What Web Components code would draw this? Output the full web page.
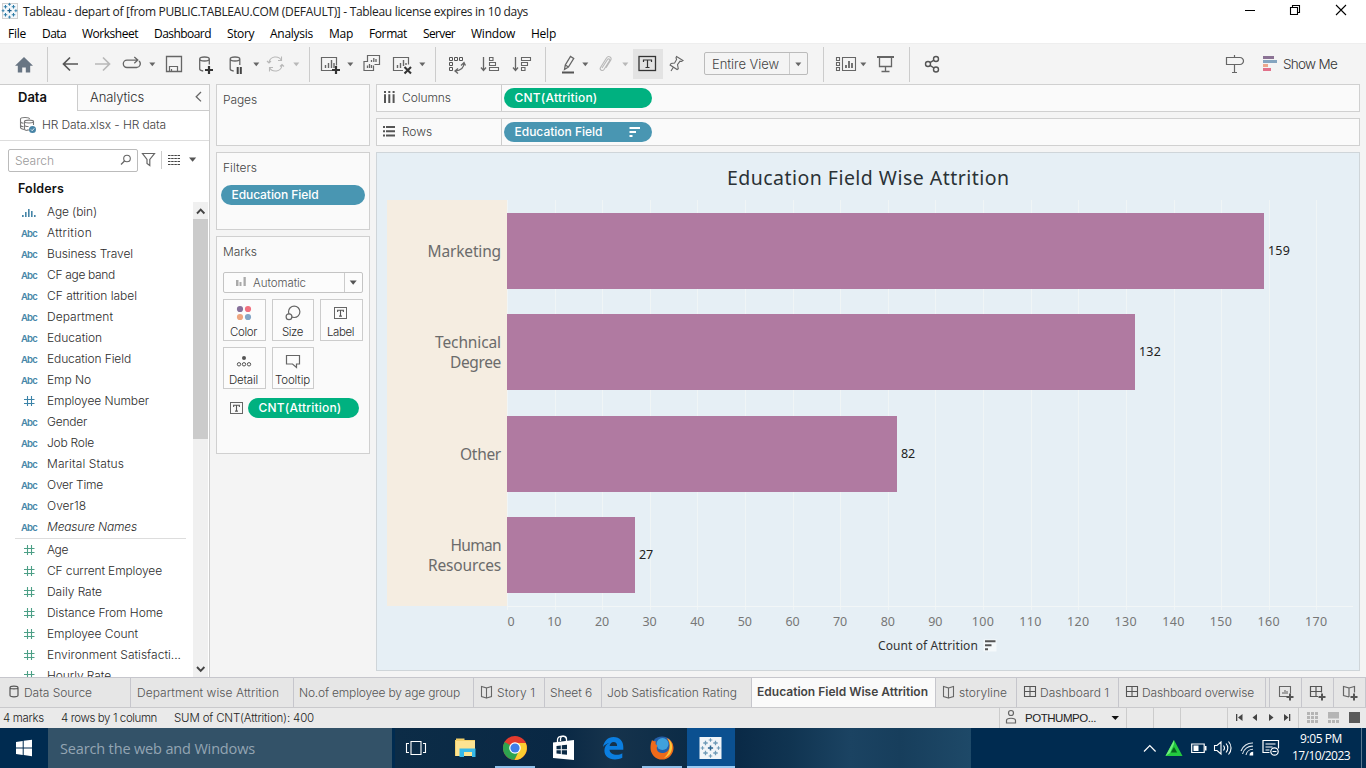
<!DOCTYPE html>
<html lang="en">
<head>
<meta charset="utf-8">
<title>Tableau</title>
<style>
html,body{margin:0;padding:0;width:1366px;height:768px;overflow:hidden;background:#f4f4f4}
</style>
</head>
<body>
<tableau-app></tableau-app>
<script>
const UI='Inter,"Liberation Sans",sans-serif', SEG='"Open Sans","Noto Sans",sans-serif', BOOK='"Noto Sans","Open Sans",sans-serif', ARIAL='"Liberation Sans",sans-serif';

/* Icons: [x, y, width, height, markup]; shapes use window coordinates through the viewBox. */
const G='#666', L='#b8b8b8';
const st=(d,c=G,w=1.3,x='')=>`<path d="${d}" fill="none" stroke="${c}" stroke-width="${w}" ${x}/>`;
const fl=(d,c=G)=>`<path d="${d}" fill="${c}"/>`;
const caret=(x,c=G,y=62.5)=>[x-3,y-.5,7,5,fl(`M${x-2.7} ${y}h6l-3 3.8z`,c)];
const plus=(x,y,c='#333',w=2.2,r=4)=>st(`M${x-r} ${y}h${2*r}M${x} ${y-r}v${2*r}`,c,w);
const spark=(cx,cy,k,c1,c2)=>{const p=(x,y,r,c,w)=>st(`M${cx+(x-r)*k} ${cy+y*k}h${2*r*k}M${cx+x*k} ${cy+(y-r)*k}v${2*r*k}`,c,w);
 return p(0,0,2.6,c1,1.5*k)+[[-5,-5],[5,-5],[-5,5],[5,5]].map(a=>p(a[0],a[1],2.2,c2,1.3*k)).join('')+[[0,-8],[0,8],[-8,0],[8,0]].map(a=>p(a[0],a[1],1.8,c2,1.1*k)).join('')};
const T=(x,y,w,h)=>`<rect x="${x+.5}" y="${y+.5}" width="${w-1}" height="${h-1}" fill="none" stroke="#666" stroke-width="1"/>`+st(`M${x+w*.28} ${y+h*.42}V${y+h*.27}H${x+w*.72}V${y+h*.42}M${x+w*.5} ${y+h*.27}V${y+h*.76}M${x+w*.39} ${y+h*.76}H${x+w*.61}`,'#555',1.1);
const book=(x,y)=>st(`M${x+6} ${y+2}v10l-5-1.5v-10zM${x+6} ${y+2}l5-1.5v10l-5 1.5`,'#666',1.1);
const dash=(x,y)=>st(`M${x+.5} ${y+.5}h11v10h-11zM${x+6} ${y+.5}v10M${x+.5} ${y+5.5}h11`,'#555',1.1);
const hash=c=>[24,0,11,12,st('M27.5 1v10M31.500 1v10M24 4.500h10.500M24 8.500h10.500',c,1.1)];
const sortI=(x,y,c)=>fl(`M${x} ${y}h10.500v2h-10.500zM${x} ${y+4}h6.500v2h-6.500zM${x} ${y+8}h3v2h-3z`,c);
const ICON={
 logo:[2,3,16,16,`<rect x="2.500" y="3.500" width="15" height="15" fill="#f4f8fb" stroke="#d0d0d0"/>`+spark(9.500,10.700,.8,'#1c5f8c','#2f7da8')],
 min:[1245,4,12,12,st('M1245 10.500h10','#000',1)],
 max:[1289,4,12,12,st('M1290.500 7.500h7v7h-7zM1292.500 7.500v-2h7v7h-2','#000',1.1)],
 close:[1335,4,12,12,st('M1336 5l10 10M1346 5l-10 10','#000',1.1)],
 home:[15,56,18,17,fl('M24 57l9 8.700h-2.800v6.800h-4.400v-5h-3.600v5h-4.400v-6.800H15z','#687583')],
 back:[62,56,17,16,st('M78 64H63.500M70 57.500L63.500 64l6.500 6.500','#555',1.7)],
 fwd:[94,56,17,16,st('M95 64h14.500M103 57.500l6.500 6.500-6.500 6.500',L,1.7)],
 loop:[122,56,20,15,st('M133 67.500H127a3.700 3.700 0 0 1 0-7.400h10.500M134.300 57l3.500 3.100-3.500 3.100M139 61a3.700 3.700 0 0 1-2.500 6.500h-3.500')],
 save:[165,55,18,18,st('M166.500 56.500h15v15h-15z')+st('M169.500 71.500v-5h8v5M171.500 71.500v-2.500','#666',1.2)],
 dbadd:[199,56,15,18,st('M199.700 59c0-1.200 2-2 4.800-2s4.800.8 4.800 2-2 2-4.800 2-4.800-.8-4.800-2zV69c0 1 1.500 1.800 3.500 2M209.300 59v5.500')+plus(209,70)],
 dbpause:[229,56,15,18,st('M230.200 59c0-1.200 2-2 4.800-2s4.800.8 4.800 2-2 2-4.800 2-4.800-.8-4.800-2zV69c0 1 1.500 1.800 3.500 2M239.800 59v6')+st('M237.700 67v7M240.800 67v7','#444',2)],
 refresh:[266,55,19,18,st('M269 62.500a6.700 6.700 0 0 1 12.500-2M281.500 56.500v4h-3.500M282 65.500a6.700 6.700 0 0 1-12.500 2M269.500 71.500v-4h3.500M267 61l2 2 2-2M280 66.500l2-2 2 2',L,1.1)],
 newsheet:[320,56,20,18,st('M332 70.500h-10.500v-13h15v8','#666',1.2)+st('M325.500 68v-3M328.500 68v-5M331.500 68v-8M334 68v-5','#666',1.4)+plus(336,70)],
 dupe:[363,55,17,17,st('M367.500 62v-6.500h12v9h-5M367.500 61.500h-3.500v9h9.500v-5','#666',1.2)+st('M371.500 62v-2M373.800 62v-4M376 62v-3M367.500 68v-2.500M369.500 68v-4M371.500 68v-3')],
 clear:[392,56,20,18,st('M403 70.500h-9.500v-13h15v7','#666',1.2)+st('M397.500 68v-3M400.500 68v-5M403.500 66v-6M406 65v-2','#666',1.4)+st('M404.500 67l6.500 6.500M411 67l-6.500 6.500','#333',2.1)],
 swap:[448,56,18,18,st('M449.500 57.500h3v3h-3zM454.500 57.500h3v3h-3zM459.500 57.500h3v3h-3zM449.500 62.500h3v3h-3zM449.500 67.500h3v3h-3z','#555',1)+st('M464 63c0 5-3 7.500-9 8M461 65.500l3-3 1.500 3M458 68.500l-3 2.500 3 2.500')],
 sortasc:[480,56,20,17,st('M483.500 57v13M481 67.500l2.500 3 2.500-3')+st('M489.500 57.500h3.500v3h-3.500zM489.500 62.500h6v3h-6zM489.500 67.500h9v3h-9z',G,1.1)],
 sortdesc:[512,56,20,17,st('M515.500 57v13M513 67.500l2.500 3 2.500-3')+st('M521.500 57.500h9v3h-9zM521.500 62.500h6v3h-6zM521.500 67.500h3.500v3h-3.500z',G,1.1)],
 pen:[561,55,15,19,st('M564.500 69.500l.8-4.500 5.200-8.500 3.200 2-5.300 8.500zM565.300 65l3.100 2')+st('M562 72.500h12','#555',2)],
 clip:[598,55,15,17,st('M602 68l5.500-8.500c.9-1.400 3-.2 2 1.400l-5.500 8.600c-1.500 2.200-4.800.3-3.500-2l6-9.500c2-3 6-.7 4.200 2.300l-4.700 7.500',L,1.1)],
 tlabel:[638,55,19,17,`<rect x="639" y="56.500" width="16.500" height="14" fill="none" stroke="#333" stroke-width="1.3"/>`+st('M643.500 62v-2h8v2M647.500 60v7.500M645.500 67.500h4','#333',1.2)],
 pin:[670,55,15,17,st('M676.500 56.500l6.500 4-1.500 1-1.500-.3-2.500 3.500.8 4-1.200.8-7-4.500 1-1.500 3.500-.5 2-3.500-.6-1.800zM673.500 67l-2.500 4',G,1.1)],
 cards:[835,56,22,17,st('M836.500 57.500h3v3h-3zM836.500 62.500h3v3h-3zM836.500 67.500h3v3h-3zM842.500 57.500h13v13h-13z',G,1.1)+st('M846 68v-3M849 68v-7M852 68v-5','#555',1.6)],
 present:[876,55,19,18,st('M877 57h17','#555',1.8)+st('M879.500 57.500v9h12v-9M885.500 66.500v5M881.500 71.500h8')],
 share:[924,55,16,18,`<g fill="none" stroke="#555" stroke-width="1.400"><circle cx="928" cy="64" r="2.500"/><circle cx="936" cy="59" r="2.500"/><circle cx="936" cy="69.500" r="2.500"/><path d="M930 62.700l4-2.500M930 65.300l4 2.700"/></g>`],
 sign:[1225,54,20,20,st('M1226.500 57.500h13.500c2 0 3.500 2 3.500 3.500s-1.500 3.500-3.500 3.500h-13.500zM1234.500 55v2.500M1234.500 64.500v8M1232 72.500h5',G,1.2)],
 showme:[1262,55,16,17,fl('M1263 56h11v3h-11z','#8b7294')+fl('M1263 60h14v3h-14z','#85a5c0')+fl('M1263 64h5v3h-5z','#eba78c')+fl('M1263 68h8v3h-8z','#e2718a')],
 chevl:[194,91,10,12,st('M201 92l-4.800 4.700 4.800 4.700')],
 source:[19,116,18,18,st('M29 130h-2M24 129.500c-2-.4-3.500-1.200-3.500-2V119c0-2 9-2 9 0M20.500 121.500c0 1 1.500 1.500 3 1.800M20.500 125c0 .8 1 1.400 3 1.700M24.500 121.500c0-1.900 9-1.900 9 0s-9 1.900-9 0v7.500c0 .8 1.500 1.400 3 1.500M33.500 121.500v3.500M24.500 125c0 1 2 1.500 4 1.500','#777',1.1)+`<circle cx="32.500" cy="129.500" r="3.500" fill="#4784a6"/>`+st('M31 129.500l1.200 1.200 2-2.300','#fff',.9)],
 mag:[119,153,13,14,`<circle cx="127" cy="158.500" r="3.300" fill="none" stroke="#666" stroke-width="1.100"/>`+st('M124.500 161l-3.500 3.500','#666',1.3)],
 funnel:[141,152,15,16,st('M142.500 153.500h12l-4.700 6v6l-2.800-2v-4z','#666',1.2)],
 listi:[167,153,14,13,st('M168 155.500h12M168 158.500h12M168 161.500h12M168 164.500h12','#444',1.1,'stroke-dasharray="2.500 .667"')],
 caretp:[188,157,9,6,fl('M189 157.500h7.200l-3.600 4.300z','#555')],
 bin:[22,0,14,12,fl('M22 9h1.700v2H22zM25 6h1.600v5H25zM28 3h1.600v8H28zM31 5h1.600v6H31zM34 9h1.600v2H34z','#4786a8')],
 hashb:hash('#3b83a8'), hashg:hash('#4c9f86'),
 up:[194,204,14,14,st('M197 213.500l3.700-3.800 3.700 3.800','#444',1.9)],
 down:[194,662,14,12,st('M197 667l3.700 3.800 3.700-3.800','#444',1.9)],
 cols:[383,91,12,13,fl('M384 91h2v2h-2zM388.300 91h2v2h-2zM392.600 91h2v2h-2zM384 94.200h2v8.800h-2zM388.300 94.200h2v8.800h-2zM392.600 94.200h2v8.800h-2z','#555')],
 rows:[382,125,14,13,fl('M383 126h2v2h-2zM383 130.300h2v2h-2zM383 134.600h2v2h-2zM386 126h9v2h-9zM386 130.300h9v2h-9zM386 134.600h9v2h-9z','#555')],
 psort:[629,126,12,12,sortI(629.500,127,'#fff')],
 autob:[235,276,12,13,fl('M236 280h2.500v6H236zM239.500 282h2v4h-2zM243.500 277h2.300v9h-2.300z','#aaa')],
 acaret:[349,280,9,6,fl('M349.700 280.500h7l-3.500 4.200z','#555')],
 color:[236,305,16,16,`<circle cx="240" cy="309" r="3.100" fill="#86709a"/><circle cx="248" cy="309" r="3.100" fill="#f0707f"/><circle cx="240" cy="317" r="3.100" fill="#eea680"/><circle cx="248" cy="317" r="3.100" fill="#84a6c6"/>`],
 size:[285,305,16,16,`<g fill="none" stroke="#666" stroke-width="1.200"><circle cx="294.200" cy="311.800" r="5.700"/><circle cx="289" cy="316.800" r="2.900" fill="#fafafa"/></g>`],
 label:[334,307,13,12,T(334,307,13,12)],
 detail:[236,355,16,13,`<circle cx="244" cy="358" r="2" fill="#555"/><g fill="none" stroke="#555"><circle cx="239" cy="364.300" r="1.700"/><circle cx="244" cy="364.300" r="1.700"/><circle cx="249" cy="364.300" r="1.700"/></g>`],
 tip:[285,354,16,15,st('M286.500 355.500h13v8.500h-3v3.500l-4-3.500h-6z',G,1.2)],
 tpill:[230,402,13,12,T(230,402,13,12)],
 axsort:[984,640,12,11,`<path d="M983.500 639.500h13v12h-13z" fill="#fff" opacity=".6"/>`+sortI(985,640.300,'#555')],
 ds:[9,685,10,14,st('M10 687.700c0-2 8-2 8 0v7.600c0 2-8 2-8 0zM10 687.700c0 1.500 8 1.500 8 0','#555',1.2)],
 bookA:[480,685,13,14,book(480.500,686)], bookB:[942,685,13,14,book(942.500,686)],
 dashA:[1024,686,13,12,dash(1024,686)], dashB:[1126,686,13,12,dash(1126,686)],
 addS:[1278,685,16,16,st('M1288 696.500h-8.500v-10h11v7','#666',1.1)+st('M1283 694v-2M1285 694v-4M1287 694v-3','#666',1.1)+plus(1290,697,'#555',2,3.500)],
 addD:[1310,685,17,16,st('M1318 696.500h-7.500v-10h11v6M1316 686.500v10M1310.500 691.500h11','#555',1.2)+plus(1322,697,'#555',2,3.500)],
 addB:[1342,685,17,16,st('M1349 697v-9l-5.500-1.500v9l5.500 1.500M1349 688l5.500-1.500v6','#666',1.2)+plus(1354,697,'#555',2,3.500)],
 user:[1005,709,12,17,`<circle cx="1011" cy="713" r="2.500" fill="none" stroke="#666" stroke-width="1.200"/>`+st('M1006.500 723v-2.500c0-3 9-3 9 0v2.500z','#666',1.2)],
 ucaret:[1111,715,8,6,fl('M1111.500 716h7.500l-3.700 4z','#111')],
 nfirst:[1235,713,8,9,fl('M1236 714h1.300v7H1236zM1242.500 714v7l-4.500-3.500z','#444')],
 nprev:[1252,713,7,9,fl('M1257 714v7l-4.500-3.500z','#444')],
 nnext:[1267,713,7,9,fl('M1269 714v7l4.500-3.500z','#444')],
 nlast:[1282,713,9,9,fl('M1284 714v7l4.500-3.500zM1289 714h1.300v7h-1.300z','#444')],
 gA:[1307,712,11,11,fl([0,4,8].map(a=>[0,4,8].map(b=>`M${1307+a} ${712+b}h3v3h-3z`).join('')).join(''),'#b5b5b5')],
 gB:[1328,712,11,11,fl('M1328 712h11v6.500h-11zM1328 720h3v3h-3zM1332 720h3v3h-3zM1336 720h3v3h-3z','#b5b5b5')],
 gC:[1349,712,11,11,fl('M1349 712h11v11h-11z','#5a5a5a')],
 win:[16,740,16,16,fl('M16 742l6.700-1v6.500H16zM23.700 740.800l8.300-1.100v7.800h-8.300zM16 748.400h6.700v6.500l-6.700-1zM23.700 748.400h8.300v7.800l-8.300-1.200z','#fff')],
 task:[405,740,22,17,st('M411 741.500h10v13h-10z','#fff',1.1)+st('M409 743.500h-2.500v9h2.500M423 743.500h2.500v9h-2.500','#fff',1.1)],
 folder:[455,738,22,20,fl('M455 740h1v-1.500h8.500v1.500H475v16h-20z','#f3cf68')+fl('M456 741h19v15h-19z','#fde391')+fl('M459.500 748.500h16v8.500h-3.500v-5h-8v5h-4.500z','#37b9e8')],
 chrome:[502,735,26,26,`<circle cx="515" cy="748" r="12" fill="#e33b2e"/><path d="M515 748L504.600 742A12 12 0 0 0 514 760l6-9z" fill="#2ea44f"/><path d="M515 748h5.200l-5.600 12A12 12 0 0 0 525.800 743H515z" fill="#fccd30"/><circle cx="515" cy="748" r="5.800" fill="#fff"/><circle cx="515" cy="748" r="4.600" fill="#3f7ee8"/>`],
 store:[552,735,23,26,fl('M553 742.500l21-2.500v20l-21-2z','#fff')+st('M557.500 742v-2c0-4.500 9-5.500 9-.5v1.500M560.500 741v-2c0-4 6-3.500 6 0','#fff',1.3)+fl('M556.500 746l4.300-.5v3.800h-4.300zM561.800 745.300l5.200-.6v4.600h-5.200zM556.500 750.300h4.300v3.700l-4.300-.4zM561.800 750.300h5.200v4.400l-5.200-.5z','#0b2b46')],
 edge:[602,736,22,23,fl('M603 747c1-6 5-10 10.500-10 6.500 0 9.800 4.500 9.800 10v2.800H609.500c.3 3.500 3.500 5 7 5 2.400 0 4.300-.7 5.800-1.600v4.500c-2 1.200-4.800 1.700-7.300 1.700-6.500 0-10.600-3.300-10.600-8.900 0-3.500 1.900-6.300 5-7.700-2.700.8-5 2.300-6.400 4.200zM609.600 746h7.500c0-2.400-1.200-4-3.500-4s-3.700 1.700-4 4z','#0b7ee0')],
 firefox:[649,735,25,25,`<circle cx="662" cy="747.500" r="11" fill="#245fa9"/><circle cx="662.500" cy="744" r="6" fill="#3fa1dc"/><path d="M652 740c1 1 2 1.300 4 1.500-1 2-.5 3 1.500 4-2 3 0 7.500 4.500 7.500 4 0 6-2 7.500-5 .5-4-.5-7-3-10 5 2 7 6 7 10a11.500 11.500 0 0 1-23 0c0-3 .5-5.500 1.500-8z" fill="#ee6a1a"/><path d="M669.500 748c.8-4 .2-7-2-9.500 3.500 2 5 6 4.500 10-.6 5-4 8.500-8 9.500 3-2.500 5-6 5.500-10z" fill="#fbc83a"/>`],
 tab:[699,737,22,22,`<rect x="699.500" y="737" width="22" height="22" fill="#f1f5f8"/>`+spark(710.500,748,1,'#2c6690','#6e9ab6')],
 chevu:[1143,744,14,9,st('M1144 751.500l5.800-5.800 5.800 5.800','#fff',1.2)],
 tri:[1165,740,18,17,fl('M1174 740l8.500 16h-17z','#23c93f')+fl('M1174 747l3.200 5.500h-6.400z','#07631d')+fl('M1165.500 756l8.500-16 0 4-4 9z','#6df07a')],
 batt:[1191,743,16,11,st('M1191.700 744h12.500v8.500h-12.500z','#fff',1.2)+fl('M1193.500 745.500h5v5.500h-5zM1205 746h1.500v4.500h-1.500z','#fff')],
 vol:[1213,740,19,16,st('M1214.500 745.500h2.500l4-3.500v12l-4-3.500h-2.500zM1223.500 745.500c1.200 1.500 1.200 3.500 0 5M1226 743.500c2.400 2.600 2.400 6.400 0 9M1228.500 741.500c3.400 3.800 3.400 9.200 0 13','#fff',1.1)],
 wifi:[1240,741,14,15,st('M1241 751a12 12 0 0 1 12-8M1242.500 754a10 10 0 0 1 10.500-7.800M1246 755a7 7 0 0 1 7-5.700','#dfe8ee',1.1)+fl('M1249.500 755.500a3.700 3.700 0 0 1 3.700-3.700v3.700z','#fff')],
 action:[1262,739,18,17,st('M1269.500 752.500h-6.500v-12h15.500v8M1265.500 744h10M1265.500 747h7M1265.500 750h4','#fff',1.2)+`<circle cx="1274.500" cy="751.500" r="3.700" fill="#002b50" stroke="#fff" stroke-width="1.200"/>`+st('M1272.500 751.500h4','#fff',1.1)]
};
[['c1',152],['c2',256],['c4',350],['c5',422],['c6',585],['c8',798],['c9',863]].forEach(a=>ICON[a[0]]=caret(a[1]));
ICON.c3=caret(296,L);ICON.c7=caret(625,L);

/* Row helpers: turn window x positions into left margins inside a flex row. */
const ic=name=>({x:ICON[name][0],w:ICON[name][2],y:ICON[name][1],h:ICON[name][3],html:`<ui-icon name="${name}"></ui-icon>`});
const tx=(x,r,cy,text,o={})=>({x,w:r-x,y:cy-10,html:`<ui-text w="${r-x}" size="${o.s||12}" weight="${o.b||(o.f?400:360)}" color="${o.c||'#2c2c2c'}" face="${o.f||'UI'}" ${o.i?'slant':''}>${text}</ui-text>`});
const bx=(x,y,w,h,css,html='')=>({x,w,y,html:`<div style="box-sizing:border-box;width:${w}px;height:${h}px;${css}">${html}</div>`});
const line=(x,y,h,c='#ccc')=>bx(x,y,1,h,'background:'+c);
const row=(left,top,items)=>{let cur=left;return '<div class="row">'+items.map(i=>{const m=i.x-cur;cur=i.x+i.w;return `<div class="cell" style="margin:${i.y-top}px 0 0 ${m}px;width:${i.w}px">${i.html}</div>`}).join('')+'</div>'};
const ROWCSS='*{box-sizing:border-box}.row{display:flex;align-items:flex-start;height:100%}.cell{flex:none}';

const define=(tag,host,css,render)=>customElements.define(tag,class extends HTMLElement{
 connectedCallback(){ if(this.shadowRoot)return; const r=this.attachShadow({mode:'open'});
  r.innerHTML=`<style>${ROWCSS}:host{display:block;box-sizing:border-box;${host}}${css}</style>${render(this)}`;}
});

customElements.define('ui-text',class extends HTMLElement{
 connectedCallback(){ if(this.shadowRoot)return;
  const a=n=>this.getAttribute(n), fam={UI,SEG,BOOK,ARIAL}[a('face')||'UI'];
  const r=this.attachShadow({mode:'open'});
  r.innerHTML=`<style>:host{display:block;white-space:pre;height:20px;font:${this.hasAttribute('slant')?'italic ':''}${a('weight')||400} ${a('size')||12}px/20px ${fam.replace(/"/g,"'")};color:${a('color')||'#333'}}span{display:inline-block}</style><span><slot></slot></span>`;
  const w=+a('w'), s=r.querySelector('span'), n=this.textContent.length;
  if(w){const nat=s.getBoundingClientRect().width; if(nat) s.style.letterSpacing=((w-nat)/n).toFixed(3)+'px';}
 }
});
customElements.define('ui-icon',class extends HTMLElement{
 connectedCallback(){ if(this.shadowRoot)return; const [x,y,w,h,m]=ICON[this.getAttribute('name')];
  this.attachShadow({mode:'open'}).innerHTML=`<style>:host{display:block;width:${w}px;height:${h}px}svg{display:block;overflow:visible}</style><svg width="${w}" height="${h}" viewBox="${x} ${y} ${w} ${h}">${m}</svg>`;}
});

define('title-bar','height:24px;background:#fff','',()=>row(0,0,[ic('logo'),tx(23,528,12,'Tableau - depart of [from PUBLIC.TABLEAU.COM (DEFAULT)] - Tableau license expires in 10 days',{f:'SEG',s:12,c:'#222'}),ic('min'),ic('max'),ic('close')]));
define('menu-bar','height:19px;background:#fff','',()=>row(0,24,[[8,26,'File'],[42,66,'Data'],[82,138,'Worksheet'],[154,211,'Dashboard'],[227,254,'Story'],[270,313,'Analysis'],[329,353,'Map'],[369,407,'Format'],[423,455,'Server'],[471,515,'Window'],[531,556,'Help']].map(a=>tx(a[0],a[1],33.500,a[2],{f:'SEG',s:12,c:'#000'}))));
define('tool-bar','height:41px;background:#f4f4f4;border-top:1px solid #eee','',()=>row(0,44,[
 ic('home'),line(47,47,35),ic('back'),ic('fwd'),ic('loop'),ic('c1'),ic('save'),ic('dbadd'),ic('dbpause'),ic('c2'),ic('refresh'),ic('c3'),line(309,47,35),
 ic('newsheet'),ic('c4'),ic('dupe'),ic('clear'),ic('c5'),line(435,47,35),ic('swap'),ic('sortasc'),ic('sortdesc'),line(545,47,35),ic('pen'),ic('c6'),ic('clip'),ic('c7'),
 bx(633,49,30,30,'background:#e3e3e3;padding:6px 0 0 5px','<ui-icon name="tlabel"></ui-icon>'),ic('pin'),
 bx(704,52,104,23,'border:1px solid #bbb;border-radius:2px',row(705,53,[tx(712,779,63.500,'Entire View',{s:13,c:'#444'}),line(789,53,21),ic('c8')])),
 line(823,47,35),ic('cards'),ic('c9'),ic('present'),line(909,47,35),ic('share'),ic('sign'),ic('showme'),tx(1283,1337,63.500,'Show Me',{s:13.500,c:'#333'})]));

define('field-row','height:21px','',h=>{const r=+h.getAttribute('r'),k=h.getAttribute('kind'),nm=h.textContent;
 const lead=k==='abc'?tx(21,37,11,'Abc',{s:9.500,b:600,c:'#4786a8'}):{...ic(k),y:4};
 return row(0,0,[lead,tx(47,r,10,nm,{i:h.hasAttribute('slant')})])});
const F=[['bin','Age (bin)',97],['abc','Attrition',92],['abc','Business Travel',133],['abc','CF age band',115],['abc','CF attrition label',137],['abc','Department',113],['abc','Education',102],['abc','Education Field',131],['abc','Emp No',91],['hashb','Employee Number',149],['abc','Gender',87],['abc','Job Role',94],['abc','Marital Status',124],['abc','Over Time',103],['abc','Over18',86],['abc','Measure Names',137,1]];
const M=[['Age',68],['CF current Employee',162],['Daily Rate',102],['Distance From Home',163],['Employee Count',138],['Environment Satisfacti...',181],['Hourly Rate',111]];
define('data-pane','width:210px;height:593px;background:#fff;border-top:1px solid #ccc;border-right:1px solid #ccc;overflow:hidden',
 '.tabs{height:26px}.src{height:30px;border-bottom:1px solid #ddd}.find{height:34px}.fold{height:27px}.body{display:flex;height:475px}.list{width:193px;overflow:hidden}.sep{height:1px;background:#ddd;margin:0 7px 1px 15px}.bar{width:15px;background:#f0f0f0;display:flex;flex-direction:column}.thumb{height:220px;background:#cbcbcb}.sp{flex:1}',
 ()=>`<div class="tabs">${row(0,85,[tx(18,47,97,'Data',{s:13,b:600,c:'#111'}),bx(77,85,132,26,'background:#fafafa;border-left:1px solid #ccc;border-bottom:1px solid #ccc',row(78,85,[tx(90,144,97,'Analytics',{s:13}),ic('chevl')]))])}</div>
 <div class="src">${row(0,111,[ic('source'),tx(42,166,125,'HR Data.xlsx - HR data',{c:'#444'})])}</div>
 <div class="find">${row(0,141,[bx(8,149,130,23,'border:1px solid #bbb;border-radius:2px',row(9,150,[tx(15,54,160.500,'Search',{c:'#999'}),ic('mag')])),ic('funnel'),line(161,151,18),ic('listi'),ic('caretp')])}</div>
 <div class="fold">${row(0,175,[tx(18,64,188.500,'Folders',{s:12.500,b:600,c:'#111'})])}</div>
 <div class="body"><div class="list">${F.map(f=>`<field-row kind="${f[0]}" r="${f[2]}" ${f[3]?'slant':''}>${f[1]}</field-row>`).join('')}<div class="sep"></div>${M.map(f=>`<field-row kind="hashg" r="${f[1]}">${f[0]}</field-row>`).join('')}</div>
 <div class="bar">${row(193,202,[ic('up')]).replace('class="row"','class="row" style="height:17px"')}<div class="thumb"></div><div class="sp"></div>${row(193,659,[ic('down')]).replace('class="row"','class="row" style="height:18px"')}</div></div>`);

define('pill-chip','height:20px;border-radius:10px','',h=>{const x=+h.getAttribute('x'),r=+h.getAttribute('r');
 const items=[tx(x,r,10,h.textContent,{s:12,b:500,c:'#fff'})]; if(h.hasAttribute('sort'))items.push({...ic('psort'),y:4});
 return row(+h.getAttribute('left'),0,items)});
const pill=(x,y,w,c,tx0,tr,t,sort='')=>({x,w,y,html:`<pill-chip style="background:${c}" left="${x}" x="${tx0}" r="${tr}" ${sort}>${t}</pill-chip>`});
const GREEN='#00b180',BLUE='#4996b2';
define('mark-button','border:1px solid #ccc;background:#fcfcfc;height:42px','',h=>{const l=+h.getAttribute('left'),t=+h.getAttribute('top'),n=h.getAttribute('icon');
 return `<div style="height:22px">${row(l+1,t+1,[ic(n)])}</div>${row(l+1,t+23,[tx(+h.getAttribute('a'),+h.getAttribute('b'),t+32.500,h.textContent,{s:11.500})])}`});
const mb=(x,y,w,n,a,b,t)=>({x,w,y,html:`<mark-button left="${x}" top="${y}" icon="${n}" a="${a}" b="${b}">${t}</mark-button>`});
define('card-column','width:154px;display:flex;flex-direction:column;gap:6px','section{border:1px solid #d0d0d0;background:#fafafa}.p{height:62px}.f{height:78px}.m{height:218px}.h{height:36px}.k{height:26px}.b{height:48px}',
 ()=>`<section class="p">${row(217,85,[tx(223,257,100,'Pages',{c:'#444'})])}</section>
 <section class="f"><div style="height:32px">${row(217,153,[tx(223,257,168,'Filters',{c:'#444'})])}</div>${row(217,185,[pill(221,185,144,BLUE,231.500,318.500,'Education Field')])}</section>
 <section class="m"><div class="h">${row(217,237,[tx(223,257,252,'Marks',{c:'#444'})])}</div><div class="k">${row(217,273,[bx(223,272,140,21,'border:1px solid #c4c4c4;border-radius:2px;background:#fcfcfc',row(224,273,[ic('autob'),tx(253,306,283,'Automatic',{s:11.500,c:'#555'}),line(344,273,19),ic('acaret')]))])}</div>
 <div class="b">${row(217,299,[mb(223,299,43,'color',230,257,'Color'),mb(272,299,42,'size',282,303,'Size'),mb(320,299,43,'label',327,354,'Label')])}</div>
 <div class="b">${row(217,347,[mb(223,347,43,'detail',229,258,'Detail'),mb(272,347,42,'tip',275,310,'Tooltip')])}</div>
 ${row(217,395,[ic('tpill'),pill(248,398,111,GREEN,258.500,341.500,'CNT(Attrition)')])}</section>`);
define('shelf-row','height:28px;border:1px solid #d0d0d0;background:#fafafa','',h=>{const c=h.getAttribute('kind')==='cols',t=c?85:119;
 return row(377,t,[ic(h.getAttribute('kind')),tx(402,c?451:432,t+13,c?'Columns':'Rows',{c:'#444'}),line(501,t,26),c?pill(504,88,148,GREEN,514.500,597.500,'CNT(Attrition)'):pill(504,122,148,BLUE,514.500,602.500,'Education Field','sort')])});

const D=[['Marketing',[[427.500,501]],159],['Technical Degree',[[435,501],[450,501]],132],['Other',[[460,501]],82],['Human Resources',[[450.500,501],[428,501]],27]];
define('bar-chart','height:519px;border:1px solid #cfd5d9;background:#e6eff5',
 '.title{height:47px}.plot{display:grid;grid-template-columns:120px 846px;grid-template-rows:repeat(4,101.500px) 4px;margin-left:10px;width:966px}.head{background:#f5ede1;display:flex;flex-direction:column;justify-content:center;align-items:flex-end;padding:0 6px 0 0}.lane{display:flex;align-items:center;gap:4px;background:repeating-linear-gradient(90deg,#f0f5f6 0 1px,transparent 1px 47.610px)}.lane.tick{border-top:1px solid #f2f6f7}.b{height:76px;background:#b07aa1}.head.end{background:none}.axis{height:24px}',
 ()=>`<div class="title">${row(377,153,[tx(727,1009.500,178,'Education Field Wise Attrition',{f:'BOOK',s:19.500,b:430,c:'#2b3236'})])}</div><div class="plot">${D.map(d=>{const ws=d[0].split(' ');return `<div class="head">${ws.map((w,i)=>`<ui-text w="${d[1][i][1]-d[1][i][0]}" size="15.500" color="#6b6b6b" face="BOOK">${w}</ui-text>`).join('')}</div><div class="lane"><div class="b" style="width:${Math.floor(d[2]*4.762)}px"></div><ui-text w="${d[2]>99?22:14}" size="12.5" color="#222" face="BOOK">${d[2]}</ui-text></div>`}).join('')}<div class="head end"></div><div class="lane tick"></div></div>
 <div class="axis">${row(377,610,[...Array(18).keys()].map(k=>{const c=k?506.700+k*47.630:511,w=k>9?22.500:k?14:7;return tx(c-w/2,c+w/2,621.500,''+k*10,{f:'BOOK',s:12.500,c:'#777'})}))}</div>
 <div class="axis">${row(377,634,[tx(878,978,645.500,'Count of Attrition',{f:'BOOK',s:12,c:'#333'}),ic('axsort')])}</div>`);

const C={c:'#555'};
const tabI=[[0,131,[ic('ds'),tx(24,92,692.500,'Data Source',C)]],[131,163,[tx(137,279,692.500,'Department wise Attrition',C)]],[294,180,[tx(299,460,692.500,'No.of employee by age group',C)]],[474,71,[ic('bookA'),tx(497,535,692.500,'Story 1',C)]],[545,57,[tx(550,592,692.500,'Sheet 6',C)]],[602,150,[tx(607,737,692.500,'Job Satisfication Rating',C)]],[752,184,[tx(757,928,692,'Education Field Wise Attrition',{c:'#444',s:12,b:600})],1],[936,81,[ic('bookB'),tx(959,1007,692.500,'storyline',C)]],[1017,102,[ic('dashA'),tx(1040,1109,692.500,'Dashboard 1',C)]],[1119,147,[ic('dashB'),tx(1142,1254,692.500,'Dashboard overwise',C)]],[1266,4,[]],[1270,32,[ic('addS')]],[1302,32,[ic('addD')]],[1334,32,[ic('addB')]]];
define('sheet-tabs','height:31px;background:#e6e6e6;display:flex;border-top:1px solid #c6c6cc;border-bottom:1px solid #c9c9cc','.t{border-right:1px solid #c6c6cc;height:29px;flex:none}.on{background:#fafafa}',
 ()=>tabI.map(t=>`<div class="t ${t[3]?'on':''}" style="width:${t[1]}px">${row(t[0],678,t[2])}</div>`).join(''));
define('status-bar','height:20px;background:#eaeaea','',()=>row(0,708,[tx(3,44,718,'4 marks',{s:11.500,c:'#222'}),tx(61,157,718,'4 rows by 1 column',{s:11.500,c:'#222'}),tx(174,314,718,'SUM of CNT(Attrition): 400',{s:11.500,c:'#222'}),
 line(999,708,20),ic('user'),tx(1025,1096,718,'POTHUMPO...',{f:'ARIAL',s:11.500,c:'#222'}),ic('ucaret'),line(1126,708,20),line(1153,708,20),line(1180,708,20),line(1227,708,20),ic('nfirst'),ic('nprev'),ic('nnext'),ic('nlast'),line(1298,708,20),ic('gA'),ic('gB'),ic('gC')]));
const cell=(x,w,n,css)=>bx(x,728,w,40,css,row(x,728,[ic(n)]));
define('task-bar','height:40px;background:linear-gradient(90deg,#002b50 395px,#0c2c47 395px,#092844 560px,#16334c 610px,#0b2b46 690px,#0a2a47 740px,#103451 790px,#1b4362 850px,#173e5c 900px,#1e4968 971px,#002b50 971px)','',
 ()=>row(0,728,[ic('win'),bx(48,728,344,40,'background:#335268',row(48,728,[tx(60,255,749,'Search the web and Windows',{f:'SEG',s:14.500,c:'#93a5b3'})])),ic('task'),ic('folder'),
 cell(495,40,'chrome','border-bottom:2px solid #8fc0ea'),ic('store'),ic('edge'),cell(642,40,'firefox','border-bottom:2px solid #8fc0ea'),cell(687,48,'tab','background:#0b5090;border-bottom:2px solid #9acbf4'),
 ic('chevu'),ic('tri'),ic('batt'),ic('vol'),ic('wifi'),ic('action'),
 {x:1292,w:59,y:729,html:`<div style="height:17px;padding-left:8px"><ui-text w="42" size="12" color="#fff" face="SEG">9:05 PM</ui-text></div><ui-text w="58" size="12" color="#fff" face="SEG">17/10/2023</ui-text>`},line(1361,728,40,'#5a7890')]));
define('tableau-app','width:1366px;height:768px;overflow:hidden;background:#f4f4f4','main{display:flex;height:593px;gap:6px}.work{display:flex;flex-direction:column;gap:6px;width:984px}',
 ()=>`<title-bar></title-bar><menu-bar></menu-bar><tool-bar></tool-bar><main><data-pane></data-pane><card-column></card-column><div class="work"><shelf-row kind="cols"></shelf-row><shelf-row kind="rows"></shelf-row><bar-chart></bar-chart></div></main><sheet-tabs></sheet-tabs><status-bar></status-bar><task-bar></task-bar>`);
</script>
</body>
</html>
